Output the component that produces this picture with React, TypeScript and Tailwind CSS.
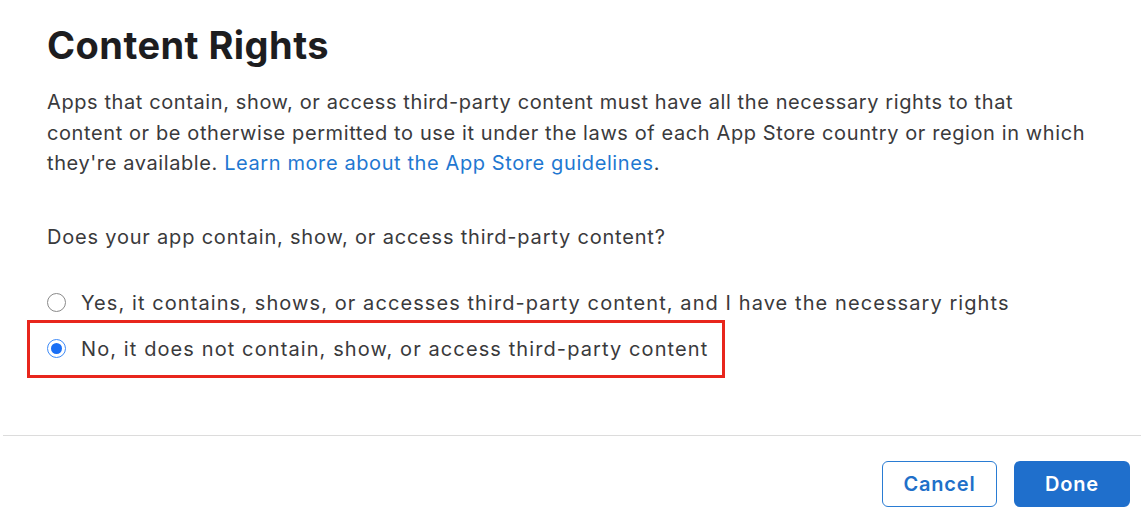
import React from "react";

export default function App() {
  return (
    <div
      className="w-[1141px] h-[519px] bg-white overflow-hidden flex flex-col"
      style={{ fontFamily: "Inter, 'Noto Sans', Arial, sans-serif" }}
    >
      <div className="pl-[47px]">
        <h1 className="mt-[22px] text-[38px] leading-[46px] font-bold text-[#1d1d1f] tracking-[0.45px]">
          Content Rights
        </h1>
        <p className="mt-[19px] text-[20px] leading-[30.5px] text-[#3a3a3c] tracking-[0.6px] whitespace-nowrap">
          Apps that contain, show, or access third-party content must have all the necessary rights to that
          <br />
          content or be otherwise permitted to use it under the laws of each App Store country or region in which
          <br />
          they're available. <span className="text-[#1f78d1]">Learn more about the App Store guidelines</span>.
        </p>
        <p className="mt-[43px] text-[20px] leading-[30px] text-[#3a3a3c] tracking-[0.8px] whitespace-nowrap">
          Does your app contain, show, or access third-party content?
        </p>
      </div>
      <div className="ml-[27px] mt-[36px] flex flex-col gap-[2px]">
        <div className="h-[30px] pl-[20px] flex items-center gap-[15px]">
          <div className="w-[19px] h-[19px] shrink-0 rounded-full border-[1.5px] border-[#8a8a8a] bg-white" />
          <span className="text-[20px] text-[#3a3a3c] tracking-[1.08px] whitespace-nowrap">
            Yes, it contains, shows, or accesses third-party content, and I have the necessary rights
          </span>
        </div>
        <div className="h-[58px] w-fit border-[3px] border-[#e8261c] pl-[17px] pr-[14px] flex items-center gap-[15px]">
          <div className="w-[19px] h-[19px] shrink-0 rounded-full border-[1.5px] border-[#3d8af7] bg-white flex items-center justify-center">
            <div className="w-[11px] h-[11px] rounded-full bg-[#1a6ff5]" />
          </div>
          <span className="text-[20px] text-[#3a3a3c] tracking-[1.1px] whitespace-nowrap">
            No, it does not contain, show, or access third-party content
          </span>
        </div>
      </div>
      <div className="ml-[3px] mt-[57px] h-px bg-[#dcdcdc]" />
      <div className="mt-[25px] pr-[11px] flex justify-end gap-[17px]">
        <button className="w-[115px] h-[46px] rounded-[6px] border border-[#2a7cd3] bg-white text-[20px] font-semibold tracking-[0.8px] text-[#1f70c9]">
          Cancel
        </button>
        <button className="w-[116px] h-[46px] rounded-[6px] bg-[#1f6fcc] text-[20px] font-semibold tracking-[0.8px] text-white">
          Done
        </button>
      </div>
    </div>
  );
}
